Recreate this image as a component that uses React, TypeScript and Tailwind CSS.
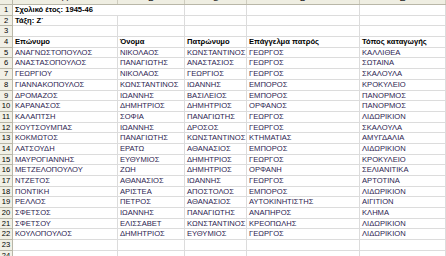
import React from 'react'

const COLS = ['A', 'B', 'C', 'D', 'E']

const HEAD = ['Επώνυμο', 'Όνομα', 'Πατρώνυμο', 'Επάγγελμα πατρός', 'Τόπος καταγωγής']

const PUPILS: string[][] = [
  ['ΑΝΑΓΝΩΣΤΟΠΟΥΛΟΣ', 'ΝΙΚΟΛΑΟΣ', 'ΚΩΝΣΤΑΝΤΙΝΟΣ', 'ΓΕΩΡΓΟΣ', 'ΚΑΛΛΙΘΕΑ'],
  ['ΑΝΑΣΤΑΣΟΠΟΥΛΟΣ', 'ΠΑΝΑΓΙΩΤΗΣ', 'ΑΝΑΣΤΑΣΙΟΣ', 'ΓΕΩΡΓΟΣ', 'ΣΩΤΑΙΝΑ'],
  ['ΓΕΩΡΓΙΟΥ', 'ΝΙΚΟΛΑΟΣ', 'ΓΕΩΡΓΙΟΣ', 'ΓΕΩΡΓΟΣ', 'ΣΚΑΛΟΥΛΑ'],
  ['ΓΙΑΝΝΑΚΟΠΟΥΛΟΣ', 'ΚΩΝΣΤΑΝΤΙΝΟΣ', 'ΙΩΑΝΝΗΣ', 'ΕΜΠΟΡΟΣ', 'ΚΡΟΚΥΛΕΙΟ'],
  ['ΔΡΟΜΑΖΟΣ', 'ΙΩΑΝΝΗΣ', 'ΒΑΣΙΛΕΙΟΣ', 'ΕΜΠΟΡΟΣ', 'ΠΑΝΟΡΜΟΣ'],
  ['ΚΑΡΑΝΑΣΟΣ', 'ΔΗΜΗΤΡΙΟΣ', 'ΔΗΜΗΤΡΙΟΣ', 'ΟΡΦΑΝΟΣ', 'ΠΑΝΟΡΜΟΣ'],
  ['ΚΑΛΑΠΤΣΗ', 'ΣΟΦΙΑ', 'ΠΑΝΑΓΙΩΤΗΣ', 'ΓΕΩΡΓΟΣ', 'ΛΙΔΩΡΙΚΙΟΝ'],
  ['ΚΟΥΤΣΟΥΜΠΑΣ', 'ΙΩΑΝΝΗΣ', 'ΔΡΟΣΟΣ', 'ΓΕΩΡΓΟΣ', 'ΣΚΑΛΟΥΛΑ'],
  ['ΚΟΚΜΩΤΟΣ', 'ΠΑΝΑΓΙΩΤΗΣ', 'ΚΩΝΣΤΑΝΤΙΝΟΣ', 'ΚΤΗΜΑΤΙΑΣ', 'ΑΜΥΓΔΑΛΙΑ'],
  ['ΛΑΤΣΟΥΔΗ', 'ΕΡΑΤΩ', 'ΑΘΑΝΑΣΙΟΣ', 'ΕΜΠΟΡΟΣ', 'ΛΙΔΩΡΙΚΙΟΝ'],
  ['ΜΑΥΡΟΓΙΑΝΝΗΣ', 'ΕΥΘΥΜΙΟΣ', 'ΔΗΜΗΤΡΙΟΣ', 'ΓΕΩΡΓΟΣ', 'ΚΡΟΚΥΛΕΙΟ'],
  ['ΜΕΤΖΕΛΟΠΟΥΛΟΥ', 'ΖΩΗ', 'ΔΗΜΗΤΡΙΟΣ', 'ΟΡΦΑΝΗ', 'ΣΕΛΙΑΝΙΤΙΚΑ'],
  ['ΝΤΖΕΤΟΣ', 'ΑΘΑΝΑΣΙΟΣ', 'ΙΩΑΝΝΗΣ', 'ΓΕΩΡΓΟΣ', 'ΑΡΤΟΤΙΝΑ'],
  ['ΠΟΝΤΙΚΗ', 'ΑΡΙΣΤΕΑ', 'ΑΠΟΣΤΟΛΟΣ', 'ΕΜΠΟΡΟΣ', 'ΛΙΔΩΡΙΚΙΟΝ'],
  ['ΡΕΛΛΟΣ', 'ΠΕΤΡΟΣ', 'ΑΘΑΝΑΣΙΟΣ', 'ΑΥΤΟΚΙΝΗΤΙΣΤΗΣ', 'ΑΙΓΙΤΙΟΝ'],
  ['ΣΦΕΤΣΟΣ', 'ΙΩΑΝΝΗΣ', 'ΠΑΝΑΓΙΩΤΗΣ', 'ΑΝΑΠΗΡΟΣ', 'ΚΛΗΜΑ'],
  ['ΣΦΕΤΣΟΥ', 'ΕΛΙΣΣΑΒΕΤ', 'ΚΩΝΣΤΑΝΤΙΝΟΣ', 'ΚΡΕΟΠΩΛΗΣ', 'ΛΙΔΩΡΙΚΙΟΝ'],
  ['ΚΟΥΛΟΠΟΥΛΟΣ', 'ΔΗΜΗΤΡΙΟΣ', 'ΕΥΘΥΜΙΟΣ', 'ΓΕΩΡΓΟΣ', 'ΛΙΔΩΡΙΚΙΟΝ'],
]

const grid = 'grid grid-cols-[13px_105px_67px_62px_113px_1fr]'

function Row({ n, cells, bold, spill }: { n: number; cells: string[]; bold?: boolean; spill?: boolean }) {
  return (
    <div className={`${grid} h-[10.7px] shrink-0`}>
      <div className="flex items-center justify-center border-r border-b border-[#b9b7a8] bg-[#f1f0e6] text-black">
        {n}
      </div>
      {[0, 1, 2, 3, 4].map(i => (
        <div
          key={i}
          className={`flex items-center whitespace-nowrap border-b border-[#dcdcdc] pl-[2px] ${
            spill && i === 0 ? 'overflow-visible' : 'overflow-hidden border-r border-r-[#dcdcdc]'
          } ${bold ? 'font-bold text-black' : 'text-[#2c2350]'}`}
        >
          {cells[i] ?? ''}
        </div>
      ))}
    </div>
  )
}

export default function App() {
  const empty = ['', '', '', '', '']
  return (
    <div className="flex h-[256px] w-[446px] flex-col overflow-hidden bg-white font-['Liberation_Sans',Arial,sans-serif] text-[7.6px] leading-none">
      <div className={`${grid} h-[5px] shrink-0 overflow-hidden border-b border-[#b9b7a8] bg-[#efeee2]`}>
        <div className="border-r border-[#b9b7a8]" />
        {COLS.map(c => (
          <div key={c} className="overflow-hidden border-r border-[#cfcdbf]">
            <div className="-mt-[8px] flex h-[12px] items-center justify-center text-[9px] text-[#222]">{c}</div>
          </div>
        ))}
      </div>
      <Row n={1} cells={['Σχολικό έτος: 1945-46']} bold spill />
      <Row n={2} cells={['Τάξη: Ζ΄']} bold />
      <Row n={3} cells={empty} />
      <Row n={4} cells={HEAD} bold />
      {PUPILS.map((p, i) => (
        <Row key={i} n={i + 5} cells={p} />
      ))}
      <Row n={23} cells={empty} />
      <Row n={24} cells={empty} />
    </div>
  )
}
